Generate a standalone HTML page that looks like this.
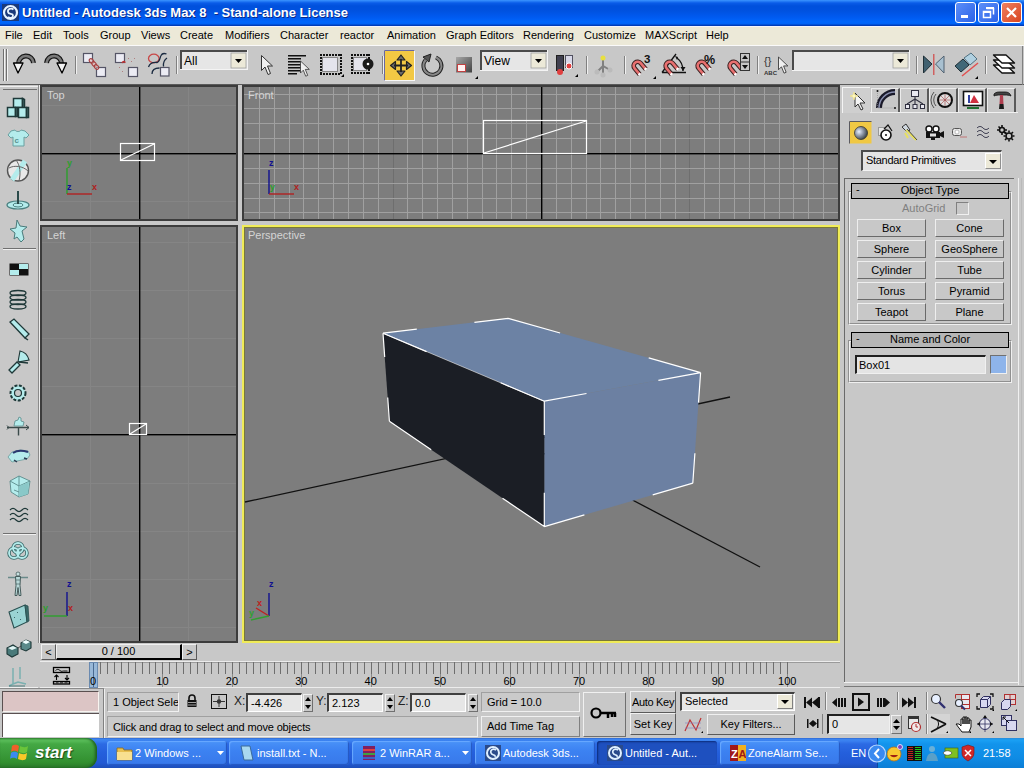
<!DOCTYPE html>
<html><head><meta charset="utf-8">
<style>
*{margin:0;padding:0;box-sizing:border-box}
html,body{width:1024px;height:768px;overflow:hidden;background:#c8c8c8;font-family:"Liberation Sans",sans-serif;font-size:11px;color:#000}
.a{position:absolute}
svg{display:block}
.tb{top:2px;width:21px;height:21px;border:1px solid #fff;border-radius:3px}
.mi{position:absolute;top:3px;font-size:11px;white-space:pre}
.btn{position:absolute;white-space:nowrap;background:#c8c8c8;border:1px solid;border-color:#f0f0f0 #5a5a5a #5a5a5a #f0f0f0;text-align:center;font-size:11px;line-height:16px}
.inp{position:absolute;background:#e6e6e6;border:1px solid;border-color:#404040 #ffffff #ffffff #404040;font-size:11px;white-space:pre}
</style></head><body>
<div class="a" style="left:0;top:0;width:1024px;height:26px;background:linear-gradient(#3c95ff 0px,#2a82f8 1px,#0a5ce8 3px,#0050dc 6px,#0052e0 11px,#005af0 17px,#0066fc 22px,#0062f4 24px,#0040c0 25px,#0038b0 26px)"></div>
<div class="a" style="left:22px;top:5px;color:#fff;font-weight:bold;font-size:13px;white-space:pre;text-shadow:1px 1px 0 #0a2a8a">Untitled - Autodesk 3ds Max 8  - Stand-alone License</div>
<div class="a tb" style="left:955px;background:linear-gradient(135deg,#5d8ff8,#2a62e8)"></div>
<div class="a tb" style="left:978px;background:linear-gradient(135deg,#5d8ff8,#2a62e8)"></div>
<div class="a tb" style="left:1001px;background:linear-gradient(135deg,#f08060,#d84420)"></div>
<svg class="a" style="left:2px;top:4px" width="17" height="17" viewBox="0 0 17 17"><rect x="0" y="0" width="17" height="17" fill="#1a3a7a"/><circle cx="8.5" cy="8.5" r="6.5" fill="none" stroke="#e8f4ff" stroke-width="2.2"/><path d="M11.5 5.5c-2.5-2-6-.5-5.5 2.5s5 1 5 3.5-3 3-5 1.5" fill="none" stroke="#e8f4ff" stroke-width="1.8"/></svg>
<svg class="a" style="left:955px;top:2px" width="68" height="22" viewBox="955 2 68 22">
<rect x="961" y="15" width="7" height="3" fill="#fff"/>
<rect x="983.5" y="11.5" width="7" height="6" fill="none" stroke="#fff" stroke-width="1.5"/><rect x="983" y="11" width="8" height="2" fill="#fff"/>
<path d="M986.5 8.5h7v6" fill="none" stroke="#fff" stroke-width="1.5"/><rect x="986" y="7" width="8" height="2" fill="#fff"/>
<path d="M1007 8l9 9M1016 8l-9 9" stroke="#fff" stroke-width="2.2"/>
</svg>
<div class="a" style="left:0;top:26px;width:1024px;height:19px;background:#ece9d8">
<span class="mi" style="left:5px">File</span><span class="mi" style="left:33px">Edit</span><span class="mi" style="left:63px">Tools</span><span class="mi" style="left:100px">Group</span><span class="mi" style="left:141px">Views</span><span class="mi" style="left:180px">Create</span><span class="mi" style="left:225px">Modifiers</span><span class="mi" style="left:280px">Character</span><span class="mi" style="left:340px">reactor</span><span class="mi" style="left:387px">Animation</span><span class="mi" style="left:446px">Graph Editors</span><span class="mi" style="left:523px">Rendering</span><span class="mi" style="left:584px">Customize</span><span class="mi" style="left:645px">MAXScript</span><span class="mi" style="left:706px">Help</span>
</div>
<div class="a" style="left:0;top:45px;width:1024px;height:1px;background:#fafafa"></div>

<div class="a" style="left:0;top:26px;width:1024px;height:1px;background:#f4f4fc"></div><div class="a" style="left:0;top:46px;width:1024px;height:38px;background:#c8c8c8"></div>
<div class="a" style="left:0;top:84px;width:1024px;height:1px;background:#5a5a5a"></div>
<svg class="a" style="left:0;top:0" width="1024" height="90" viewBox="0 0 1024 90">
<rect x="3" y="49" width="1" height="32" fill="#707070"/><rect x="6" y="49" width="1" height="32" fill="#707070"/><rect x="4" y="49" width="1" height="32" fill="#f4f4f4"/><rect x="7" y="49" width="1" height="32" fill="#f4f4f4"/>
<rect x="75" y="56" width="1" height="18" fill="#808080"/><rect x="76" y="56" width="1" height="18" fill="#f0f0f0"/>
<rect x="176" y="56" width="1" height="18" fill="#808080"/><rect x="177" y="56" width="1" height="18" fill="#f0f0f0"/>
<rect x="382" y="56" width="1" height="18" fill="#808080"/><rect x="383" y="56" width="1" height="18" fill="#f0f0f0"/>
<rect x="586" y="56" width="1" height="18" fill="#808080"/><rect x="587" y="56" width="1" height="18" fill="#f0f0f0"/>
<rect x="624" y="56" width="1" height="18" fill="#808080"/><rect x="625" y="56" width="1" height="18" fill="#f0f0f0"/>
<rect x="757" y="56" width="1" height="18" fill="#808080"/><rect x="758" y="56" width="1" height="18" fill="#f0f0f0"/>
<rect x="916" y="56" width="1" height="18" fill="#808080"/><rect x="917" y="56" width="1" height="18" fill="#f0f0f0"/>
<rect x="985" y="56" width="1" height="18" fill="#808080"/><rect x="986" y="56" width="1" height="18" fill="#f0f0f0"/>
<path d="M18.5 64 A7.5 7.5 0 0 1 33.5 63" fill="none" stroke="#151515" stroke-width="5"/><path d="M18.5 64 A7.5 7.5 0 0 1 33.5 63" fill="none" stroke="#7a7a7a" stroke-width="2.6"/>
<path d="M13.5 63L23 63L18 73Z" fill="#f4f4f4" stroke="#000" stroke-width="1.3" stroke-linejoin="round"/>
<path d="M46.5 63 A7.5 7.5 0 0 1 61.5 64" fill="none" stroke="#151515" stroke-width="5"/><path d="M46.5 63 A7.5 7.5 0 0 1 61.5 64" fill="none" stroke="#7a7a7a" stroke-width="2.6"/>
<path d="M57 63L66.5 63L62 73Z" fill="#f4f4f4" stroke="#000" stroke-width="1.3" stroke-linejoin="round"/>
<rect x="83.5" y="53.5" width="9" height="9" fill="#ececf4" stroke="#555566" stroke-width="1.2"/>
<rect x="96.5" y="67.5" width="9" height="9" fill="#ececf4" stroke="#555566" stroke-width="1.2"/>
<g fill="#e8c0c0" fill-opacity="0.5" stroke="#a84040" stroke-width="1.1"><ellipse cx="91.5" cy="61" rx="2.6" ry="1.8" transform="rotate(45 91.5 61)"/><ellipse cx="94" cy="64" rx="2.6" ry="1.8" transform="rotate(45 94 64)"/><ellipse cx="96.5" cy="67" rx="2.6" ry="1.8" transform="rotate(45 96.5 67)"/></g>
<rect x="115.5" y="53.5" width="9" height="9" fill="#ececf4" stroke="#555566" stroke-width="1.2"/>
<rect x="128.5" y="67.5" width="9" height="9" fill="#ececf4" stroke="#555566" stroke-width="1.2"/>
<path d="M122 63c1-2 3-2 3 0" stroke="#c03030" stroke-width="1.3" fill="none"/><g fill="#b08080"><rect x="128" y="58" width="1" height="1"/><rect x="131" y="61" width="1" height="1"/><rect x="134" y="58" width="1" height="1"/><rect x="119" y="67" width="1" height="1"/><rect x="122" y="71" width="1" height="1"/></g>
<rect x="160.5" y="67.5" width="8.5" height="8.5" fill="#ececf4" stroke="#555566" stroke-width="1.2"/>
<g fill="none" stroke-width="1.3"><ellipse cx="153.8" cy="58.5" rx="5.3" ry="4.3" stroke="#c84848"/><path d="M148.5 67C150 63 153 62 157 62.5C160 62 160 57 161 55.5C162 53.5 164 53 166.5 54" stroke="#1a2a40"/><path d="M152 74C152 70 154 68 159.5 68" stroke="#1a2a40"/><path d="M163.5 66.5C163 62 164 60 167 58" stroke="#1a2a40"/></g>
<rect x="180" y="50" width="68" height="20" fill="#e6e6e6"/><rect x="180" y="69" width="68" height="1" fill="#f4f4f4"/><rect x="247" y="50" width="1" height="20" fill="#f4f4f4"/><rect x="180" y="50" width="67" height="2" fill="#4a4a4a"/><rect x="180" y="50" width="2" height="19" fill="#4a4a4a"/>
<rect x="231" y="53" width="15" height="15" fill="#ece9d8" stroke="#a0a0a0" stroke-width="0.8"/><path d="M235 59h7l-3.5 4z" fill="#000"/>
<text x="184" y="65" font-family="Liberation Sans" font-size="12">All</text>
<path transform="translate(261.5,55.5) scale(1)" d="M0 0L0 15L3.5 11.5L6.5 19L9 18L6 10.5L11 10.5Z" fill="#f0f0f0" stroke="#333" stroke-width="1"/>
<g fill="#111"><rect x="288" y="55" width="18" height="1.5"/><rect x="288" y="58" width="13" height="1.5"/><rect x="288" y="61" width="13" height="1.5"/><rect x="288" y="64" width="13" height="1.5"/><rect x="288" y="67" width="13" height="1.5"/><rect x="288" y="70" width="13" height="1.5"/><rect x="288" y="73" width="9" height="1.5"/></g>
<path transform="translate(300.5,61) scale(0.8)" d="M0 0L0 15L3.5 11.5L6.5 19L9 18L6 10.5L11 10.5Z" fill="#f0f0f0" stroke="#333" stroke-width="1"/>
<g fill="#111"><rect x="320" y="54" width="2" height="2"/><rect x="320" y="73" width="2" height="2"/><rect x="323" y="54" width="2" height="2"/><rect x="323" y="73" width="2" height="2"/><rect x="326" y="54" width="2" height="2"/><rect x="326" y="73" width="2" height="2"/><rect x="329" y="54" width="2" height="2"/><rect x="329" y="73" width="2" height="2"/><rect x="332" y="54" width="2" height="2"/><rect x="332" y="73" width="2" height="2"/><rect x="335" y="54" width="2" height="2"/><rect x="335" y="73" width="2" height="2"/><rect x="338" y="54" width="2" height="2"/><rect x="338" y="73" width="2" height="2"/><rect x="320" y="54" width="2" height="2"/><rect x="340" y="54" width="2" height="2"/><rect x="320" y="57" width="2" height="2"/><rect x="340" y="57" width="2" height="2"/><rect x="320" y="60" width="2" height="2"/><rect x="340" y="60" width="2" height="2"/><rect x="320" y="63" width="2" height="2"/><rect x="340" y="63" width="2" height="2"/><rect x="320" y="66" width="2" height="2"/><rect x="340" y="66" width="2" height="2"/><rect x="320" y="69" width="2" height="2"/><rect x="340" y="69" width="2" height="2"/><rect x="320" y="72" width="2" height="2"/><rect x="340" y="72" width="2" height="2"/></g>
<rect x="322.5" y="57.5" width="15" height="14" fill="#e4e4ec" stroke="#888" stroke-width="1"/>
<path d="M341 77l3-3v3z" fill="#000"/>
<g fill="#111"><rect x="351" y="54" width="2" height="2"/><rect x="351" y="72" width="2" height="2"/><rect x="354" y="54" width="2" height="2"/><rect x="354" y="72" width="2" height="2"/><rect x="357" y="54" width="2" height="2"/><rect x="357" y="72" width="2" height="2"/><rect x="360" y="54" width="2" height="2"/><rect x="360" y="72" width="2" height="2"/><rect x="363" y="54" width="2" height="2"/><rect x="363" y="72" width="2" height="2"/><rect x="366" y="54" width="2" height="2"/><rect x="366" y="72" width="2" height="2"/><rect x="351" y="54" width="2" height="2"/><rect x="368" y="54" width="2" height="2"/><rect x="351" y="57" width="2" height="2"/><rect x="368" y="57" width="2" height="2"/><rect x="351" y="60" width="2" height="2"/><rect x="368" y="60" width="2" height="2"/><rect x="351" y="63" width="2" height="2"/><rect x="368" y="63" width="2" height="2"/><rect x="351" y="66" width="2" height="2"/><rect x="368" y="66" width="2" height="2"/><rect x="351" y="69" width="2" height="2"/><rect x="368" y="69" width="2" height="2"/><rect x="351" y="72" width="2" height="2"/><rect x="368" y="72" width="2" height="2"/></g>
<rect x="353.5" y="57.5" width="13" height="13" fill="#e4e4ec" stroke="#888"/><circle cx="368" cy="64" r="5.5" fill="#1a1a1a"/><circle cx="368" cy="64" r="1.3" fill="#fff"/>
<rect x="384.5" y="50.5" width="30" height="30" fill="#f2c844" stroke="#f8f8f8"/><path d="M384.5 80.5V50.5H414.5" fill="none" stroke="#6868a0"/>
<g fill="#6a6a6a" stroke="#222" stroke-width="1.2" stroke-linejoin="round"><path d="M401 55L397 60H405Z"/><path d="M401 76L397 71H405Z"/><path d="M390.5 65.5L395.5 61.5V69.5Z"/><path d="M411.5 65.5L406.5 61.5V69.5Z"/></g><path d="M401 59V72M394 65.5H408" stroke="#222" stroke-width="1.8"/>
<path d="M425.5 60 A9 9 0 1 0 436 57.5" fill="none" stroke="#222" stroke-width="4"/><path d="M425.5 60 A9 9 0 1 0 436 57.5" fill="none" stroke="#888" stroke-width="2"/>
<path d="M423 57L431 54L429 62Z" fill="#555" stroke="#222" stroke-width="1"/>
<defs><linearGradient id="sg" x1="0" y1="0" x2="1" y2="1"><stop offset="0" stop-color="#a8a8a8"/><stop offset="1" stop-color="#404040"/></linearGradient></defs>
<rect x="456" y="57" width="16" height="15.5" fill="url(#sg)"/><rect x="457.5" y="64.5" width="8" height="7" fill="#fff0f0" stroke="#c04040" stroke-width="1"/><path d="M475 79l3-3v3z" fill="#000"/>
<rect x="480" y="50" width="68" height="21" fill="#e6e6e6"/><rect x="480" y="70" width="68" height="1" fill="#f4f4f4"/><rect x="547" y="50" width="1" height="21" fill="#f4f4f4"/><rect x="480" y="50" width="67" height="2" fill="#4a4a4a"/><rect x="480" y="50" width="2" height="20" fill="#4a4a4a"/>
<rect x="531" y="53" width="15" height="15" fill="#ece9d8" stroke="#a0a0a0" stroke-width="0.8"/><path d="M535 59h7l-3.5 4z" fill="#000"/>
<text x="484" y="65" font-family="Liberation Sans" font-size="12">View</text>
<rect x="556.5" y="55.5" width="7" height="15" fill="#404050" stroke="#202020"/><rect x="565.5" y="55.5" width="7" height="12" fill="#d8d8e8" stroke="#505060"/><circle cx="560" cy="72" r="3" fill="#e04040"/><circle cx="569" cy="66" r="3" fill="#e04040" stroke="#fff" stroke-width="1"/><path d="M575 77l3-3v3z" fill="#000"/>
<path d="M603 57V66M597 72L603 66L610 70M603 66V74" stroke="#808080" stroke-width="2" fill="none"/><circle cx="603" cy="58" r="2.5" fill="#e8e040"/><circle cx="597" cy="72" r="2.5" fill="#bbb"/><circle cx="610" cy="70" r="2.5" fill="#bbb"/><circle cx="603" cy="75" r="2.5" fill="#bbb"/>
<path transform="translate(637,65) rotate(-40)" d="M-4 9V1A4 4 0 0 1 4 1V9" fill="none" stroke="#3a2020" stroke-width="4.6"/><path transform="translate(637,65) rotate(-40)" d="M-4 9V1A4 4 0 0 1 4 1V9" fill="none" stroke="#e87070" stroke-width="2.6"/><path transform="translate(637,65) rotate(-40)" d="M-4 7.5V9.5M4 7.5V9.5" stroke="#fff" stroke-width="2.6"/><text x="644" y="63" font-family="Liberation Sans" font-weight="bold" font-size="11.5" fill="#111">3</text><path d="M653 79l3-3v3z" fill="#000"/><path d="M662 72.5H686M662 72.5L676 54M677 58c4 3 6 8 6 13" stroke="#111" stroke-width="1.3" fill="none"/><path d="M683 71l-2.5-4h5z" fill="#111"/><path d="M675 56l3 1-1 3z" fill="#111"/><path transform="translate(669,65) rotate(-40)" d="M-4 9V1A4 4 0 0 1 4 1V9" fill="none" stroke="#3a2020" stroke-width="4.6"/><path transform="translate(669,65) rotate(-40)" d="M-4 9V1A4 4 0 0 1 4 1V9" fill="none" stroke="#e87070" stroke-width="2.6"/><path transform="translate(669,65) rotate(-40)" d="M-4 7.5V9.5M4 7.5V9.5" stroke="#fff" stroke-width="2.6"/><path transform="translate(701,65) rotate(-40)" d="M-4 9V1A4 4 0 0 1 4 1V9" fill="none" stroke="#3a2020" stroke-width="4.6"/><path transform="translate(701,65) rotate(-40)" d="M-4 9V1A4 4 0 0 1 4 1V9" fill="none" stroke="#e87070" stroke-width="2.6"/><path transform="translate(701,65) rotate(-40)" d="M-4 7.5V9.5M4 7.5V9.5" stroke="#fff" stroke-width="2.6"/><text x="704" y="64" font-family="Liberation Sans" font-weight="bold" font-size="12.5" fill="#111">%</text><path transform="translate(733,65) rotate(-40)" d="M-4 9V1A4 4 0 0 1 4 1V9" fill="none" stroke="#3a2020" stroke-width="4.6"/><path transform="translate(733,65) rotate(-40)" d="M-4 9V1A4 4 0 0 1 4 1V9" fill="none" stroke="#e87070" stroke-width="2.6"/><path transform="translate(733,65) rotate(-40)" d="M-4 7.5V9.5M4 7.5V9.5" stroke="#fff" stroke-width="2.6"/><rect x="740.5" y="53.5" width="9" height="17" fill="#c8c8c8" stroke="#333"/><path d="M742 59h6l-3-4zM742 65h6l-3 4z" fill="#111"/><rect x="741" y="61.5" width="8" height="1" fill="#333"/>
<text x="764" y="65" font-family="Liberation Sans" font-size="11" fill="#333">{}</text><text x="764" y="75" font-family="Liberation Sans" font-weight="bold" font-size="6" fill="#333">ABC</text>
<path transform="translate(778.5,57) scale(0.85)" d="M0 0L0 15L3.5 11.5L6.5 19L9 18L6 10.5L11 10.5Z" fill="#f0f0f0" stroke="#333" stroke-width="1"/>
<rect x="792" y="50" width="118" height="21" fill="#e6e6e6"/><rect x="792" y="70" width="118" height="1" fill="#f4f4f4"/><rect x="909" y="50" width="1" height="21" fill="#f4f4f4"/><rect x="792" y="50" width="117" height="2" fill="#4a4a4a"/><rect x="792" y="50" width="2" height="20" fill="#4a4a4a"/>
<rect x="893" y="53" width="15" height="15" fill="#ece9d8" stroke="#a0a0a0" stroke-width="0.8"/><path d="M897 59h7l-3.5 4z" fill="#000"/>
<path d="M923.5 56L932 64L923.5 73Z" fill="#406070" stroke="#203038"/><path d="M944 56L935.5 64L944 73Z" fill="#a8c0d0" stroke="#506070"/><rect x="933" y="54" width="1.5" height="21" fill="#d06060"/>
<path d="M955 66L963 59L969 65L961 72Z" fill="#406878" stroke="#203038"/><path d="M964 58L971 53L977 59L970 65Z" fill="#b0d0e0" stroke="#507080"/><path d="M962 76L978 63" stroke="#e05050" stroke-width="1.5"/><path d="M975 79l3-3v3z" fill="#000"/>
<g fill="#fff" stroke="#111" stroke-width="1.4" stroke-linejoin="round"><path d="M993.5 65H1006L1014.5 73H1002Z"/><path d="M993.5 60H1006L1014.5 68H1002Z"/><path d="M993.5 55H1006L1014.5 63H1002Z"/></g>
</svg><div class="a" style="left:0;top:85px;width:40px;height:603px;background:#c8c8c8"></div>
<div class="a" style="left:0;top:86px;width:38px;height:1px;background:#f0f0f0"></div>
<div class="a" style="left:3px;top:89px;width:34px;height:1px;background:#707070"></div>
<div class="a" style="left:38px;top:85px;width:1px;height:603px;background:#8a8a8a"></div>
<div class="a" style="left:39px;top:85px;width:1px;height:603px;background:#ececec"></div>
<div class="a" style="left:0;top:687px;width:40px;height:1px;background:#f0f0f0"></div>
<div class="a" style="left:0;top:688px;width:104px;height:1px;background:#8a8a8a"></div>
<svg class="a" style="left:0;top:85px" width="40" height="603" viewBox="0 85 40 603">
<rect x="3" y="248" width="33" height="1" fill="#707070"/><rect x="3" y="249" width="33" height="1" fill="#f0f0f0"/>
<rect x="3" y="533" width="33" height="1" fill="#707070"/><rect x="3" y="534" width="33" height="1" fill="#f0f0f0"/>
<g stroke="#1e3838" stroke-width="1.5"><path d="M13.5 98.5h9v9h-9z" fill="#b4ecec"/><path d="M22.5 98.5l2 1v9h-2z" fill="#4a7070"/><path d="M7.5 107.5h8v9h-8z" fill="#b4ecec"/><path d="M15.5 107.5h2v9h-2z" fill="#4a7070"/><path d="M18.5 107.5h8v10h-8z" fill="#b4ecec"/><path d="M26.5 107.5h2v10h-2z" fill="#4a7070"/></g>
<path d="M11 131l4-1c1 2 5 2 6 0l4 1 4 4-3 3-2-1v9H13v-9l-2 1-3-3z" fill="#b4ecec" stroke="#6aa0a0" stroke-width="1"/><text x="14.5" y="143" font-size="8" font-weight="bold" fill="#5a9090" font-family="Liberation Sans">c</text>
<circle cx="18" cy="170.5" r="10.5" fill="#e8e8e8" stroke="#555" stroke-width="1.4"/><path d="M12 180L25 161" stroke="#b4ecec" stroke-width="5"/><path d="M9 168c5-3 14-2 19 3M16 160c4 5 5 13 3 21" fill="none" stroke="#666" stroke-width="1"/>
<ellipse cx="18" cy="205" rx="11" ry="4" fill="#b4ecec" stroke="#4a8080" stroke-width="1.2"/><ellipse cx="18" cy="205" rx="5" ry="2" fill="none" stroke="#4a8080" stroke-width="1"/><path d="M18 191v13" stroke="#2a4a4a" stroke-width="2"/>
<path d="M17 220l3 6 7 1-5 4 2 8-3 3-4-5-3 2 1-6-5-4 6-1z" fill="#b4ecec" stroke="#4a7a7a" stroke-width="1"/>
<rect x="9.5" y="263.5" width="19" height="12" fill="#111"/><rect x="19" y="264" width="9" height="5" fill="#b4ecec"/><rect x="10" y="270" width="9" height="5" fill="#b4ecec"/>
<g fill="none" stroke="#1e3838" stroke-width="1.3"><ellipse cx="18" cy="293" rx="8" ry="2.5"/><ellipse cx="18" cy="297.5" rx="8" ry="2.5"/><ellipse cx="18" cy="302" rx="8" ry="2.5"/><ellipse cx="18" cy="306.5" rx="8" ry="2.5"/></g>
<path d="M10 322l4-3 15 15-4 4z" fill="#b4ecec" stroke="#1e3838" stroke-width="1.3"/><path d="M25 338l3 2" stroke="#1e3838" stroke-width="1.5"/>
<path d="M17 362l-8 8 3 3 8-8z" fill="#b4ecec" stroke="#1e3838" stroke-width="1.3"/><path d="M18 362l2-11c5 1 8 5 9 9z" fill="#b4ecec" stroke="#1e3838" stroke-width="1.1"/><path d="M19 362l9 1" stroke="#1e3838" stroke-width="1.3"/>
<circle cx="18" cy="393" r="7.5" fill="#b4ecec" stroke="#1e3838" stroke-width="2" stroke-dasharray="3 1.5"/><circle cx="18" cy="393" r="3.5" fill="#c8c8c8" stroke="#1e3838" stroke-width="1.2"/>
<path d="M7 427.5h22M18.5 427.5v8" stroke="#3a4a4a" stroke-width="1.4"/><path d="M26 425l3 2.5-3 2.5M7 425.5l2 2-2 2" fill="none" stroke="#3a4a4a" stroke-width="1"/><path d="M14 426l1-5 3-1 1-3 2 1v3l3 1-1 4z" fill="#b4ecec" stroke="#5a8a8a" stroke-width="0.8"/><path d="M8 457l4-5 8-2 8 1 2 4-3 4-15 3z" fill="#b4ecec" stroke="#6a9a9a" stroke-width="0.8"/><path d="M13 453c3-2 8-3 15-1" fill="none" stroke="#2a3a70" stroke-width="2"/><path d="M14 460l3 2M24 458l3 1" stroke="#2a3a50" stroke-width="1.5"/><path d="M10 481l9-5 11 5-2 13-9 3-8-5z" fill="#b4ecec" stroke="#5a8a8a" stroke-width="0.9"/><path d="M19 476l0 21M10 481l9 5 11-5M14 490l5 2" fill="none" stroke="#5a8a8a" stroke-width="0.9"/><path d="M19 486l10-4-1 12-9 3z" fill="#8ac8c8"/><path d="M10 510c2-2 4-2 6 0s4 2 6 0 4-2 6 0M10 515c2-2 4-2 6 0s4 2 6 0 4-2 6 0M10 520c2-2 4-2 6 0s4 2 6 0 4-2 6 0" fill="none" stroke="#1e3838" stroke-width="1.2"/>
<g fill="none" stroke="#3a6a6a" stroke-width="3.5"><circle cx="14" cy="553" r="5"/><circle cx="22" cy="553" r="5"/><circle cx="18" cy="548" r="5"/></g><g fill="none" stroke="#b4ecec" stroke-width="1.8"><circle cx="14" cy="553" r="5"/><circle cx="22" cy="553" r="5"/><circle cx="18" cy="548" r="5"/></g>
<path d="M8 577.5h20" stroke="#6a8a8a" stroke-width="1.5"/><circle cx="18" cy="574" r="2" fill="#c8e0e0" stroke="#4a6060" stroke-width="0.8"/><path d="M15.5 576.5h5l-0.5 9 1 10h-2l-1-8-1 8h-2l1-10z" fill="#b8d8d8" stroke="#3a5050" stroke-width="0.9"/><path d="M16 580h4M16 584h4" stroke="#3a5050" stroke-width="0.6"/><path d="M9 612l16-7 2 17-13 6z" fill="#9ad4d4" stroke="#2a5050" stroke-width="1.1"/><path d="M25 605l3 1 1 15-2 1z" fill="#3a6a6a" stroke="#2a5050" stroke-width="0.8"/><g fill="#3a6a6a"><rect x="17" y="612" width="1" height="1"/><rect x="14" y="617" width="1" height="1"/><rect x="20" y="619" width="1" height="1"/></g><path d="M7 648l6-3 5 3v6l-6 3-5-3z" fill="#4a7a7a" stroke="#1e3838" stroke-width="1.1"/><path d="M8 648l5-2 4 2-5 2z" fill="#e0f4f4"/><path d="M21 643l5-3 5 2v6l-5 3-5-2z" fill="#5a8a8a" stroke="#1e3838" stroke-width="1.1"/><path d="M22 642l4-2 4 2-4 2z" fill="#f0ffff"/><path d="M18 648l3-2" stroke="#333" stroke-width="0.8"/><path d="M13 668v16l-4 2M13 684l5-2 8 2M20 667v12" fill="none" stroke="#7ab0b0" stroke-width="1.5"/><path d="M9 686l16 0" stroke="#4a7a7a" stroke-width="1"/>
</svg><svg class="a" style="left:0;top:0" width="1024" height="768" viewBox="0 0 1024 768"><rect x="40" y="85" width="198" height="136" fill="#3c3c3c"/><rect x="42" y="87" width="194" height="132" fill="#7d7d7d"/><rect x="242" y="85" width="598" height="136" fill="#3c3c3c"/><rect x="244" y="87" width="594" height="132" fill="#7d7d7d"/><rect x="40" y="225" width="198" height="418" fill="#3c3c3c"/><rect x="42" y="227" width="194" height="414" fill="#7d7d7d"/><rect x="242" y="225" width="598" height="418" fill="#f0ec58"/><rect x="244" y="227" width="594" height="414" fill="#7a7838"/><rect x="245" y="228" width="592" height="412" fill="#7d7d7d"/><rect x="259" y="87" width="1" height="132" fill="#a0a0a0"/><rect x="274" y="87" width="1" height="132" fill="#a0a0a0"/><rect x="289" y="87" width="1" height="132" fill="#a0a0a0"/><rect x="303" y="87" width="1" height="132" fill="#a0a0a0"/><rect x="318" y="87" width="1" height="132" fill="#a0a0a0"/><rect x="333" y="87" width="1" height="132" fill="#a0a0a0"/><rect x="348" y="87" width="1" height="132" fill="#a0a0a0"/><rect x="363" y="87" width="1" height="132" fill="#a0a0a0"/><rect x="378" y="87" width="1" height="132" fill="#a0a0a0"/><rect x="393" y="87" width="1" height="132" fill="#6e6e6e"/><rect x="407" y="87" width="1" height="132" fill="#a0a0a0"/><rect x="422" y="87" width="1" height="132" fill="#a0a0a0"/><rect x="437" y="87" width="1" height="132" fill="#a0a0a0"/><rect x="452" y="87" width="1" height="132" fill="#a0a0a0"/><rect x="467" y="87" width="1" height="132" fill="#a0a0a0"/><rect x="482" y="87" width="1" height="132" fill="#a0a0a0"/><rect x="496" y="87" width="1" height="132" fill="#a0a0a0"/><rect x="511" y="87" width="1" height="132" fill="#a0a0a0"/><rect x="526" y="87" width="1" height="132" fill="#a0a0a0"/><rect x="556" y="87" width="1" height="132" fill="#a0a0a0"/><rect x="571" y="87" width="1" height="132" fill="#a0a0a0"/><rect x="586" y="87" width="1" height="132" fill="#a0a0a0"/><rect x="600" y="87" width="1" height="132" fill="#a0a0a0"/><rect x="615" y="87" width="1" height="132" fill="#a0a0a0"/><rect x="630" y="87" width="1" height="132" fill="#a0a0a0"/><rect x="645" y="87" width="1" height="132" fill="#a0a0a0"/><rect x="660" y="87" width="1" height="132" fill="#a0a0a0"/><rect x="675" y="87" width="1" height="132" fill="#a0a0a0"/><rect x="689" y="87" width="1" height="132" fill="#6e6e6e"/><rect x="704" y="87" width="1" height="132" fill="#a0a0a0"/><rect x="719" y="87" width="1" height="132" fill="#a0a0a0"/><rect x="734" y="87" width="1" height="132" fill="#a0a0a0"/><rect x="749" y="87" width="1" height="132" fill="#a0a0a0"/><rect x="764" y="87" width="1" height="132" fill="#a0a0a0"/><rect x="779" y="87" width="1" height="132" fill="#a0a0a0"/><rect x="793" y="87" width="1" height="132" fill="#a0a0a0"/><rect x="808" y="87" width="1" height="132" fill="#a0a0a0"/><rect x="823" y="87" width="1" height="132" fill="#a0a0a0"/><rect x="244" y="94" width="594" height="1" fill="#a0a0a0"/><rect x="244" y="108" width="594" height="1" fill="#a0a0a0"/><rect x="244" y="123" width="594" height="1" fill="#a0a0a0"/><rect x="244" y="138" width="594" height="1" fill="#a0a0a0"/><rect x="244" y="168" width="594" height="1" fill="#a0a0a0"/><rect x="244" y="183" width="594" height="1" fill="#a0a0a0"/><rect x="244" y="198" width="594" height="1" fill="#a0a0a0"/><rect x="244" y="212" width="594" height="1" fill="#a0a0a0"/><rect x="90" y="87" width="1" height="132" fill="#858585"/><rect x="90" y="227" width="1" height="414" fill="#858585"/><rect x="188" y="87" width="1" height="132" fill="#858585"/><rect x="188" y="227" width="1" height="414" fill="#858585"/><rect x="42" y="105" width="194" height="1" fill="#858585"/><rect x="42" y="201" width="194" height="1" fill="#858585"/><rect x="42" y="242" width="194" height="1" fill="#858585"/><rect x="42" y="290" width="194" height="1" fill="#858585"/><rect x="42" y="338" width="194" height="1" fill="#858585"/><rect x="42" y="386" width="194" height="1" fill="#858585"/><rect x="42" y="483" width="194" height="1" fill="#858585"/><rect x="42" y="531" width="194" height="1" fill="#858585"/><rect x="42" y="579" width="194" height="1" fill="#858585"/><rect x="42" y="627" width="194" height="1" fill="#858585"/><rect x="139" y="87" width="1.4" height="132" fill="#000"/><rect x="42" y="153" width="194" height="1.4" fill="#000"/><rect x="541" y="87" width="1.4" height="132" fill="#000"/><rect x="244" y="153" width="594" height="1.4" fill="#000"/><rect x="139" y="227" width="1.4" height="414" fill="#000"/><rect x="42" y="434" width="194" height="1.4" fill="#000"/><g fill="none" stroke="#fff" stroke-width="1.2"><rect x="120.5" y="143.5" width="34" height="17"/><path d="M121 160L154 144"/><rect x="483.5" y="120.5" width="103" height="33"/><path d="M484 153L586 121"/><rect x="129.5" y="423.5" width="17" height="11"/><path d="M130 434L146 424"/></g><path d="M245 502L730 397" stroke="#111" stroke-width="1.3" fill="none"/><path d="M543 453L760 567" stroke="#111" stroke-width="1.3" fill="none"/><path d="M383 333.2L508.2 318.3L700.6 372.6L544.3 401.2Z" fill="#6c82a4"/><path d="M544.3 401.2L700.6 372.6L692.8 483.2L544.3 526.6Z" fill="#6c80a2"/><path d="M383 333.2L544.3 401.2L544.3 526.6L389.4 421.3Z" fill="#1b1e25"/><path d="M383 333.2L416.8 329.2 M383 333.2L384.7 357.0 M383 333.2L426.6 351.6 M508.2 318.3L474.4 322.3 M508.2 318.3L560.1 333.0 M700.6 372.6L648.7 357.9 M700.6 372.6L698.5 402.5 M700.6 372.6L658.4 380.3 M692.8 483.2L694.9 453.3 M692.8 483.2L652.7 494.9 M544.3 526.6L584.4 514.9 M544.3 526.6L502.5 498.2 M544.3 526.6L544.3 492.7 M389.4 421.3L387.7 397.5 M389.4 421.3L431.2 449.7 M544.3 401.2L586.5 393.5 M544.3 401.2L500.7 382.8 M544.3 401.2L544.3 435.1" fill="none" stroke="#fff" stroke-width="1.2"/><path d="M383 333.2L544.3 401.2" fill="none" stroke="#fff" stroke-width="1" stroke-opacity="0.55"/><g stroke-width="1.4" fill="none"><path d="M67 194L67 168" stroke="#2ca02c"/><path d="M67 194L92 194" stroke="#b02020"/><path d="M269 194L269 170" stroke="#101090"/><path d="M269 194L294 194" stroke="#b02020"/><path d="M67 616L67 592" stroke="#101090"/><path d="M67 616L44 616" stroke="#2ca02c"/><path d="M269 616L269 593" stroke="#101090"/><path d="M269 616L256 608" stroke="#c02020"/><path d="M269 616L251 620" stroke="#30a030"/></g><g font-size="9" font-weight="bold" font-family="Liberation Sans"><text x="67" y="166" fill="#2ca02c">y</text><text x="67" y="190" fill="#101090">z</text><text x="92" y="190" fill="#b02020">x</text><text x="269" y="166" fill="#101090">z</text><text x="270" y="190" fill="#2ca02c">y</text><text x="294" y="190" fill="#b02020">x</text><text x="67" y="587" fill="#101090">z</text><text x="43" y="611" fill="#2ca02c">y</text><text x="68" y="611" fill="#b02020">x</text><text x="269" y="587" fill="#101090">z</text><text x="257" y="606" fill="#c02020">x</text><text x="249" y="616" fill="#30a030">y</text></g><g font-size="11" fill="#d4d4d4" font-family="Liberation Sans"><text x="47" y="99">Top</text><text x="248" y="99">Front</text><text x="47" y="239">Left</text><text x="248" y="239">Perspective</text></g></svg><div class="a" style="left:840px;top:85px;width:184px;height:603px;background:#c8c8c8"></div>
<div class="a" style="left:1022px;top:46px;width:1px;height:39px;background:#808080"></div>
<div class="a" style="left:844px;top:178px;width:1px;height:505px;background:#6a6a6a"></div>
<div class="a" style="left:844px;top:178px;width:170px;height:1px;background:#6a6a6a"></div>
<div class="a" style="left:1018px;top:178px;width:1px;height:507px;background:#f0f0f0"></div>
<div class="a" style="left:844px;top:682px;width:175px;height:1px;background:#f0f0f0"></div>
<div class="a" style="left:841px;top:686px;width:183px;height:1px;background:#7a7a7a"></div>
<div class="a" style="left:842px;top:87px;width:28px;height:26px;background:#cfcfcf;border-top:1px solid #f4f4f4;border-left:1px solid #f4f4f4"></div>
<div class="a" style="left:871px;top:88px;width:29px;height:24px;background:#c8c8c8;border-top:1px solid #ececec;border-left:1px solid #ececec;border-right:2px solid #5a5a5a"></div>
<div class="a" style="left:900px;top:88px;width:29px;height:24px;background:#c8c8c8;border-top:1px solid #ececec;border-left:1px solid #ececec;border-right:2px solid #5a5a5a"></div>
<div class="a" style="left:929px;top:88px;width:29px;height:24px;background:#c8c8c8;border-top:1px solid #ececec;border-left:1px solid #ececec;border-right:2px solid #5a5a5a"></div>
<div class="a" style="left:958px;top:88px;width:29px;height:24px;background:#c8c8c8;border-top:1px solid #ececec;border-left:1px solid #ececec;border-right:2px solid #5a5a5a"></div>
<div class="a" style="left:987px;top:88px;width:29px;height:24px;background:#c8c8c8;border-top:1px solid #ececec;border-left:1px solid #ececec;border-right:2px solid #5a5a5a"></div>
<div class="a" style="left:870px;top:112px;width:148px;height:1px;background:#f0f0f0"></div>
<div class="a" style="left:842px;top:88px;width:1px;height:25px;background:#f4f4f4"></div>
<svg class="a" style="left:840px;top:84px" width="184" height="300" viewBox="840 84 184 300">
<path d="M855 96L855 110L858 107L861 113L863 112L860 106L865 106Z" transform="translate(0,-3)" fill="#f4f4f4" stroke="#333" stroke-width="1"/>
<path d="M854 92l1 3 3 1-3 1-1 3-1-3-3-1 3-1z" fill="#fff8c0" stroke="#f0e080" stroke-width="0.6"/>
<path d="M879 108A16 16 0 0 1 895 92" fill="none" stroke="#1a1a2a" stroke-width="6"/><path d="M879 108A16 16 0 0 1 895 92" fill="none" stroke="#8a90b0" stroke-width="1.5"/><path d="M877.5 91V108H895" fill="none" stroke="#888" stroke-width="0.6" stroke-dasharray="1 1"/><circle cx="877.5" cy="91" r="1" fill="#111"/><circle cx="895" cy="108" r="1" fill="#111"/>
<rect x="911.5" y="90.5" width="7" height="6" fill="#e8e8f0" stroke="#303040"/><path d="M915 97V104M915 99L907 104M915 99L923 104" stroke="#303040" stroke-width="1.1"/><rect x="905.5" y="104.5" width="4" height="4" fill="#e8e8f0" stroke="#303040"/><rect x="913" y="104.5" width="4" height="4" fill="#e8e8f0" stroke="#303040"/><rect x="920.5" y="104.5" width="4" height="4" fill="#e8e8f0" stroke="#303040"/>
<circle cx="945" cy="100" r="7" fill="#e0e0e0" stroke="#111" stroke-width="2"/><path d="M945 94v12M939 100h12M941 96l8 8M949 96l-8 8" stroke="#a04040" stroke-width="0.6"/><path d="M936 94a9 9 0 0 0 0 12M934 92a12 12 0 0 0 0 16" fill="none" stroke="#333" stroke-width="0.8"/>
<rect x="963.5" y="91.5" width="19" height="14" fill="#fff" stroke="#111" stroke-width="1.6"/><path d="M968 95v8h2v-8z" fill="#3040a0"/><path d="M970 103l4-8 5 8z" fill="#d03040"/><rect x="967" y="107" width="12" height="2" fill="#207030"/>
<path d="M994 94c2-2 4-2 6-2h5c3 0 5 1 6 4-2-1-4-1-6-1h-5c-2 0-4 0-6 1z" fill="#444" stroke="#111" stroke-width="0.8"/><path d="M1000 95h3l0.5 9h-4z" fill="#b04050"/><path d="M999.5 104h4l0.5 5h-5z" fill="#1a1a1a"/>
<rect x="849.5" y="121.5" width="22" height="22" fill="#f0c844"/><path d="M849.5 143.5V121.5H871.5" fill="none" stroke="#5a5a60"/>
<defs><radialGradient id="sph" cx="0.35" cy="0.4" r="0.7"><stop offset="0" stop-color="#e8f0ff"/><stop offset="0.5" stop-color="#8890a0"/><stop offset="1" stop-color="#303838"/></radialGradient></defs><circle cx="861" cy="133" r="6.5" fill="url(#sph)" stroke="#333" stroke-width="0.8"/>
<rect x="878.5" y="127.5" width="7" height="8" fill="#e8e8e8" stroke="#999"/><circle cx="886" cy="135" r="5" fill="#fff" stroke="#111" stroke-width="1.6"/><circle cx="886" cy="135" r="1" fill="#111"/><path d="M884 129l4-4 4 6" fill="none" stroke="#111" stroke-width="1.2"/>
<path d="M902 127l4-3 4 6-3 2z" fill="#d0d8e0" stroke="#333" stroke-width="1"/><path d="M906 130l10 10M905 133l3 5" stroke="#e8e060" stroke-width="2"/><path d="M907 129l10 11" stroke="#222" stroke-width="0.8"/>
<circle cx="929" cy="129" r="3" fill="#fff" stroke="#111" stroke-width="1.4"/><circle cx="936" cy="129" r="3" fill="#fff" stroke="#111" stroke-width="1.4"/><rect x="926" y="132" width="14" height="6" fill="#111"/><rect x="930" y="133.5" width="6" height="3" fill="#ddd"/><path d="M940 133l4-2v7l-4-2z" fill="#111"/><rect x="931" y="138" width="4" height="2" fill="#111"/>
<rect x="952.5" y="128.5" width="9" height="7" rx="2" fill="#e8e8e8" stroke="#555" stroke-width="1"/><circle cx="957" cy="132" r="2" fill="#fff" stroke="#999" stroke-width="0.6"/><path d="M960 137h7" stroke="#c06060" stroke-width="0.8"/>
<path d="M977 128c2-2 4-2 6 0s4 2 6 0M977 132c2-2 4-2 6 0s4 2 6 0M977 136c2-2 4-2 6 0s4 2 6 0" fill="none" stroke="#2a2a40" stroke-width="1"/>
<g stroke="#111" stroke-width="1.6" fill="none"><circle cx="1002" cy="130" r="2.5"/><circle cx="1009" cy="136" r="3"/><path d="M1002 125v2M1002 133v2M997 130h2M1005 130h2M998.5 126.5l1.5 1.5M1004 132l1.5 1.5M1009 130.5v2M1009 139.5v2M1003.5 136h2M1012.5 136h2M1005 132l1.5 1.5M1011.5 138.5l1.5 1.5M1011.5 133.5l1.5-1.5M1005 140l1.5-1.5"/></g>
</svg>
<div class="a" style="left:861px;top:150px;width:141px;height:21px;background:#e4e4e4;border-top:2px solid #4a4a4a;border-left:2px solid #4a4a4a;border-right:1px solid #f4f4f4;border-bottom:1px solid #f4f4f4;font-size:11px;line-height:17px;padding-left:3px;white-space:nowrap;letter-spacing:-0.3px">Standard Primitives</div>
<div class="a" style="left:985px;top:153px;width:16px;height:16px;background:#ece9d8;border:1px solid;border-color:#fff #909090 #909090 #fff"></div>
<svg class="a" style="left:985px;top:153px" width="16" height="16"><path d="M4 7h8l-4 4z" fill="#000"/></svg>
<div class="a" style="left:848px;top:191px;width:164px;height:134px;border:1px solid;border-color:#909090 #f0f0f0 #f0f0f0 #909090"></div>
<div class="a" style="left:849px;top:192px;width:162px;height:132px;border:1px solid;border-color:#f0f0f0 #909090 #909090 #f0f0f0"></div>
<div class="a" style="left:851px;top:183px;width:158px;height:16px;background:#b6b6b6;border:1.5px solid #000;font-size:11px;line-height:13px;text-align:center">Object Type</div>
<div class="a" style="left:856px;top:183px;font-size:11px;line-height:13px">-</div>
<div class="a" style="left:902px;top:202px;font-size:11px;color:#808080">AutoGrid</div>
<div class="a" style="left:956px;top:202px;width:13px;height:13px;border:1px solid;border-color:#808080 #f0f0f0 #f0f0f0 #808080;background:#c8c8c8"></div>
<div class="btn" style="left:857px;top:219px;width:69px;height:18px;border-color:#eeeeee #6a6a6a #6a6a6a #eeeeee">Box</div>
<div class="btn" style="left:935px;top:219px;width:69px;height:18px;border-color:#eeeeee #6a6a6a #6a6a6a #eeeeee">Cone</div>
<div class="btn" style="left:857px;top:240px;width:69px;height:18px;border-color:#eeeeee #6a6a6a #6a6a6a #eeeeee">Sphere</div>
<div class="btn" style="left:935px;top:240px;width:69px;height:18px;border-color:#eeeeee #6a6a6a #6a6a6a #eeeeee">GeoSphere</div>
<div class="btn" style="left:857px;top:261px;width:69px;height:18px;border-color:#eeeeee #6a6a6a #6a6a6a #eeeeee">Cylinder</div>
<div class="btn" style="left:935px;top:261px;width:69px;height:18px;border-color:#eeeeee #6a6a6a #6a6a6a #eeeeee">Tube</div>
<div class="btn" style="left:857px;top:282px;width:69px;height:18px;border-color:#eeeeee #6a6a6a #6a6a6a #eeeeee">Torus</div>
<div class="btn" style="left:935px;top:282px;width:69px;height:18px;border-color:#eeeeee #6a6a6a #6a6a6a #eeeeee">Pyramid</div>
<div class="btn" style="left:857px;top:303px;width:69px;height:18px;border-color:#eeeeee #6a6a6a #6a6a6a #eeeeee">Teapot</div>
<div class="btn" style="left:935px;top:303px;width:69px;height:18px;border-color:#eeeeee #6a6a6a #6a6a6a #eeeeee">Plane</div>
<div class="a" style="left:848px;top:340px;width:164px;height:43px;border:1px solid;border-color:#909090 #f0f0f0 #f0f0f0 #909090"></div>
<div class="a" style="left:849px;top:341px;width:162px;height:41px;border:1px solid;border-color:#f0f0f0 #909090 #909090 #f0f0f0"></div>
<div class="a" style="left:851px;top:332px;width:158px;height:16px;background:#b6b6b6;border:1.5px solid #000;font-size:11px;line-height:13px;text-align:center">Name and Color</div>
<div class="a" style="left:856px;top:332px;font-size:11px;line-height:13px">-</div>
<div class="a" style="left:855px;top:355px;width:131px;height:19px;background:#e4e4e4;border-top:2px solid #202020;border-left:2px solid #202020;border-right:1px solid #f0f0f0;border-bottom:1px solid #f0f0f0;font-size:11px;line-height:16px;padding-left:2px">Box01</div>
<div class="a" style="left:990px;top:355px;width:17px;height:19px;background:#8eb4ea;border:1px solid;border-color:#707070 #f0f0f0 #f0f0f0 #707070"></div><div class="a" style="left:1021px;top:178px;width:1px;height:505px;background:#bababa"></div>
<div class="a" style="left:38px;top:643px;width:806px;height:45px;background:#c8c8c8"></div>
<div class="a" style="left:40px;top:643px;width:800px;height:18px;background:#c8c8c8"></div>
<div class="btn" style="left:41px;top:644px;width:15px;height:16px;line-height:14px;font-size:11px">&lt;</div>
<div class="a" style="left:56px;top:644px;width:126px;height:16px;background:#d0d0d0;border-right:2px solid #000;border-bottom:2px solid #000;border-top:1px solid #f0f0f0;border-left:1px solid #f0f0f0;text-align:center;font-size:11px;line-height:13px">0 / 100</div>
<div class="btn" style="left:182px;top:644px;width:15px;height:16px;line-height:14px;font-size:11px">&gt;</div>
<div class="a" style="left:40px;top:661px;width:800px;height:1px;background:#ececec"></div><div class="a" style="left:98px;top:662px;width:742px;height:1px;background:#9a9a9a"></div>
<div class="a" style="left:40px;top:687px;width:800px;height:1px;background:#ececec"></div>
<div class="a" style="left:89px;top:662px;width:9px;height:26px;background:#98b8d8;border:1px solid #6a8ab0"></div>
<svg class="a" style="left:0;top:0" width="1024" height="768" viewBox="0 0 1024 768">
<rect x="93" y="663" width="1" height="24" fill="#4a6a90"/>
<rect x="100" y="662" width="1" height="12" fill="#6e6e6e"/>
<rect x="107" y="662" width="1" height="12" fill="#6e6e6e"/>
<rect x="114" y="662" width="1" height="12" fill="#6e6e6e"/>
<rect x="121" y="662" width="1" height="12" fill="#6e6e6e"/>
<rect x="128" y="662" width="1" height="12" fill="#6e6e6e"/>
<rect x="135" y="662" width="1" height="12" fill="#6e6e6e"/>
<rect x="142" y="662" width="1" height="12" fill="#6e6e6e"/>
<rect x="149" y="662" width="1" height="12" fill="#6e6e6e"/>
<rect x="155" y="662" width="1" height="12" fill="#6e6e6e"/>
<rect x="162" y="662" width="1" height="12" fill="#6e6e6e"/>
<rect x="169" y="662" width="1" height="12" fill="#6e6e6e"/>
<rect x="176" y="662" width="1" height="12" fill="#6e6e6e"/>
<rect x="183" y="662" width="1" height="12" fill="#6e6e6e"/>
<rect x="190" y="662" width="1" height="12" fill="#6e6e6e"/>
<rect x="197" y="662" width="1" height="12" fill="#6e6e6e"/>
<rect x="204" y="662" width="1" height="12" fill="#6e6e6e"/>
<rect x="211" y="662" width="1" height="12" fill="#6e6e6e"/>
<rect x="218" y="662" width="1" height="12" fill="#6e6e6e"/>
<rect x="225" y="662" width="1" height="12" fill="#6e6e6e"/>
<rect x="232" y="662" width="1" height="12" fill="#6e6e6e"/>
<rect x="239" y="662" width="1" height="12" fill="#6e6e6e"/>
<rect x="246" y="662" width="1" height="12" fill="#6e6e6e"/>
<rect x="253" y="662" width="1" height="12" fill="#6e6e6e"/>
<rect x="260" y="662" width="1" height="12" fill="#6e6e6e"/>
<rect x="267" y="662" width="1" height="12" fill="#6e6e6e"/>
<rect x="274" y="662" width="1" height="12" fill="#6e6e6e"/>
<rect x="280" y="662" width="1" height="12" fill="#6e6e6e"/>
<rect x="287" y="662" width="1" height="12" fill="#6e6e6e"/>
<rect x="294" y="662" width="1" height="12" fill="#6e6e6e"/>
<rect x="301" y="662" width="1" height="12" fill="#6e6e6e"/>
<rect x="308" y="662" width="1" height="12" fill="#6e6e6e"/>
<rect x="315" y="662" width="1" height="12" fill="#6e6e6e"/>
<rect x="322" y="662" width="1" height="12" fill="#6e6e6e"/>
<rect x="329" y="662" width="1" height="12" fill="#6e6e6e"/>
<rect x="336" y="662" width="1" height="12" fill="#6e6e6e"/>
<rect x="343" y="662" width="1" height="12" fill="#6e6e6e"/>
<rect x="350" y="662" width="1" height="12" fill="#6e6e6e"/>
<rect x="357" y="662" width="1" height="12" fill="#6e6e6e"/>
<rect x="364" y="662" width="1" height="12" fill="#6e6e6e"/>
<rect x="371" y="662" width="1" height="12" fill="#6e6e6e"/>
<rect x="378" y="662" width="1" height="12" fill="#6e6e6e"/>
<rect x="385" y="662" width="1" height="12" fill="#6e6e6e"/>
<rect x="392" y="662" width="1" height="12" fill="#6e6e6e"/>
<rect x="398" y="662" width="1" height="12" fill="#6e6e6e"/>
<rect x="405" y="662" width="1" height="12" fill="#6e6e6e"/>
<rect x="412" y="662" width="1" height="12" fill="#6e6e6e"/>
<rect x="419" y="662" width="1" height="12" fill="#6e6e6e"/>
<rect x="426" y="662" width="1" height="12" fill="#6e6e6e"/>
<rect x="433" y="662" width="1" height="12" fill="#6e6e6e"/>
<rect x="440" y="662" width="1" height="12" fill="#6e6e6e"/>
<rect x="447" y="662" width="1" height="12" fill="#6e6e6e"/>
<rect x="454" y="662" width="1" height="12" fill="#6e6e6e"/>
<rect x="461" y="662" width="1" height="12" fill="#6e6e6e"/>
<rect x="468" y="662" width="1" height="12" fill="#6e6e6e"/>
<rect x="475" y="662" width="1" height="12" fill="#6e6e6e"/>
<rect x="482" y="662" width="1" height="12" fill="#6e6e6e"/>
<rect x="489" y="662" width="1" height="12" fill="#6e6e6e"/>
<rect x="496" y="662" width="1" height="12" fill="#6e6e6e"/>
<rect x="503" y="662" width="1" height="12" fill="#6e6e6e"/>
<rect x="510" y="662" width="1" height="12" fill="#6e6e6e"/>
<rect x="517" y="662" width="1" height="12" fill="#6e6e6e"/>
<rect x="523" y="662" width="1" height="12" fill="#6e6e6e"/>
<rect x="530" y="662" width="1" height="12" fill="#6e6e6e"/>
<rect x="537" y="662" width="1" height="12" fill="#6e6e6e"/>
<rect x="544" y="662" width="1" height="12" fill="#6e6e6e"/>
<rect x="551" y="662" width="1" height="12" fill="#6e6e6e"/>
<rect x="558" y="662" width="1" height="12" fill="#6e6e6e"/>
<rect x="565" y="662" width="1" height="12" fill="#6e6e6e"/>
<rect x="572" y="662" width="1" height="12" fill="#6e6e6e"/>
<rect x="579" y="662" width="1" height="12" fill="#6e6e6e"/>
<rect x="586" y="662" width="1" height="12" fill="#6e6e6e"/>
<rect x="593" y="662" width="1" height="12" fill="#6e6e6e"/>
<rect x="600" y="662" width="1" height="12" fill="#6e6e6e"/>
<rect x="607" y="662" width="1" height="12" fill="#6e6e6e"/>
<rect x="614" y="662" width="1" height="12" fill="#6e6e6e"/>
<rect x="621" y="662" width="1" height="12" fill="#6e6e6e"/>
<rect x="628" y="662" width="1" height="12" fill="#6e6e6e"/>
<rect x="635" y="662" width="1" height="12" fill="#6e6e6e"/>
<rect x="641" y="662" width="1" height="12" fill="#6e6e6e"/>
<rect x="648" y="662" width="1" height="12" fill="#6e6e6e"/>
<rect x="655" y="662" width="1" height="12" fill="#6e6e6e"/>
<rect x="662" y="662" width="1" height="12" fill="#6e6e6e"/>
<rect x="669" y="662" width="1" height="12" fill="#6e6e6e"/>
<rect x="676" y="662" width="1" height="12" fill="#6e6e6e"/>
<rect x="683" y="662" width="1" height="12" fill="#6e6e6e"/>
<rect x="690" y="662" width="1" height="12" fill="#6e6e6e"/>
<rect x="697" y="662" width="1" height="12" fill="#6e6e6e"/>
<rect x="704" y="662" width="1" height="12" fill="#6e6e6e"/>
<rect x="711" y="662" width="1" height="12" fill="#6e6e6e"/>
<rect x="718" y="662" width="1" height="12" fill="#6e6e6e"/>
<rect x="725" y="662" width="1" height="12" fill="#6e6e6e"/>
<rect x="732" y="662" width="1" height="12" fill="#6e6e6e"/>
<rect x="739" y="662" width="1" height="12" fill="#6e6e6e"/>
<rect x="746" y="662" width="1" height="12" fill="#6e6e6e"/>
<rect x="753" y="662" width="1" height="12" fill="#6e6e6e"/>
<rect x="760" y="662" width="1" height="12" fill="#6e6e6e"/>
<rect x="766" y="662" width="1" height="12" fill="#6e6e6e"/>
<rect x="773" y="662" width="1" height="12" fill="#6e6e6e"/>
<rect x="780" y="662" width="1" height="12" fill="#6e6e6e"/>
<rect x="787" y="662" width="1" height="12" fill="#6e6e6e"/>
<rect x="162" y="674" width="1" height="13" fill="#8a8a8a"/><rect x="232" y="674" width="1" height="13" fill="#8a8a8a"/><rect x="301" y="674" width="1" height="13" fill="#8a8a8a"/><rect x="371" y="674" width="1" height="13" fill="#8a8a8a"/><rect x="440" y="674" width="1" height="13" fill="#8a8a8a"/><rect x="510" y="674" width="1" height="13" fill="#8a8a8a"/><rect x="579" y="674" width="1" height="13" fill="#8a8a8a"/><rect x="648" y="674" width="1" height="13" fill="#8a8a8a"/><rect x="718" y="674" width="1" height="13" fill="#8a8a8a"/><rect x="787" y="674" width="1" height="13" fill="#8a8a8a"/><g font-family="Liberation Sans" font-size="11" text-anchor="middle">
<text x="93.0" y="684.5">0</text>
<text x="162.4" y="684.5">10</text>
<text x="231.9" y="684.5">20</text>
<text x="301.3" y="684.5">30</text>
<text x="370.7" y="684.5">40</text>
<text x="440.1" y="684.5">50</text>
<text x="509.6" y="684.5">60</text>
<text x="579.0" y="684.5">70</text>
<text x="648.4" y="684.5">80</text>
<text x="717.9" y="684.5">90</text>
<text x="787.3" y="684.5">100</text>
</g>
<g fill="none" stroke="#000"><rect x="53.5" y="667.5" width="16" height="5" stroke-width="1.3"/><path d="M55.5 670.5c1.5-1.5 3-1.5 4.5 0s2.5 0.5 3.5 0.5h4" stroke-width="0.9"/><rect x="53.5" y="681.5" width="16" height="2.5" stroke-width="1.3"/><path d="M56 682.8h2.5M60 682.8h3M64.5 682.8h3" stroke-width="0.8"/><path d="M56.5 680v-5M54.5 677l2-2 2 2M67 675v5M65 678l2 2 2-2" stroke-width="1.1"/></g></svg><div class="a" style="left:2px;top:691px;width:97px;height:21px;background:#dcc5c5;border-top:1px solid #5a5050;border-left:1px solid #5a5050;border-bottom:1px solid #f8f4f0;border-right:1px solid #f8f4f0"></div>
<div class="a" style="left:2px;top:713px;width:97px;height:24px;background:#fff;border-top:1px solid #5a5050;border-left:1px solid #5a5050"></div>
<div class="a" style="left:103px;top:689px;width:1px;height:49px;background:#808080"></div>
<div class="a" style="left:104px;top:689px;width:1px;height:49px;background:#f0f0f0"></div>
<div class="a" style="left:107px;top:692px;width:72px;height:20px;background:#cacaca;border:1px solid;border-color:#a0a0a0 #f0f0f0 #f0f0f0 #a0a0a0;font-size:11px;line-height:18px;padding-left:5px;white-space:nowrap;overflow:hidden">1 Object Sele</div>
<div class="a" style="left:107px;top:716px;width:371px;height:21px;background:#cacaca;border:1px solid;border-color:#a0a0a0 #f0f0f0 #f0f0f0 #a0a0a0;font-size:11px;line-height:20px;padding-left:5px;white-space:nowrap;letter-spacing:-0.15px">Click and drag to select and move objects</div>
<div class="a" style="left:234px;top:694px;font-size:12px;color:#222">X:</div>
<div class="inp" style="left:246px;top:693px;width:56px;height:19px;border-width:2px 1px 1px 2px;font-size:11px;line-height:16px;padding-left:3px">-4.426</div>
<div class="a" style="left:303px;top:694px;width:10px;height:18px;border:1px solid;border-color:#f0f0f0 #707070 #707070 #f0f0f0"></div><svg class="a" style="left:303px;top:694px" width="10" height="18"><path d="M2 7L5 3L8 7Z M2 11L8 11L5 15Z" fill="#000"/></svg>
<div class="a" style="left:316px;top:694px;font-size:12px;color:#222">Y:</div>
<div class="inp" style="left:327px;top:693px;width:56px;height:19px;border-width:2px 1px 1px 2px;font-size:11px;line-height:16px;padding-left:3px">2.123</div>
<div class="a" style="left:385px;top:694px;width:10px;height:18px;border:1px solid;border-color:#f0f0f0 #707070 #707070 #f0f0f0"></div><svg class="a" style="left:385px;top:694px" width="10" height="18"><path d="M2 7L5 3L8 7Z M2 11L8 11L5 15Z" fill="#000"/></svg>
<div class="a" style="left:398px;top:694px;font-size:12px;color:#222">Z:</div>
<div class="inp" style="left:410px;top:693px;width:56px;height:19px;border-width:2px 1px 1px 2px;font-size:11px;line-height:16px;padding-left:3px">0.0</div>
<div class="a" style="left:468px;top:694px;width:10px;height:18px;border:1px solid;border-color:#f0f0f0 #707070 #707070 #f0f0f0"></div><svg class="a" style="left:468px;top:694px" width="10" height="18"><path d="M2 7L5 3L8 7Z M2 11L8 11L5 15Z" fill="#000"/></svg>
<svg class="a" style="left:186px;top:694px" width="12" height="14"><path d="M3 6V4a3 3 0 0 1 6 0v2" fill="none" stroke="#111" stroke-width="1.6"/><rect x="1.5" y="6" width="9" height="7" fill="#111"/><path d="M2 8.5h8M2 11h8" stroke="#c8c8c8" stroke-width="0.8"/></svg>
<svg class="a" style="left:211px;top:694px" width="16" height="15"><rect x="0.5" y="0.5" width="15" height="14" fill="none" stroke="#111"/><path d="M8 2v11M2 7.5h12" stroke="#111" stroke-width="0.8"/><circle cx="8" cy="7.5" r="2.2" fill="#333"/></svg>
<div class="a" style="left:481px;top:692px;width:99px;height:20px;background:#cacaca;border:1px solid;border-color:#a0a0a0 #f0f0f0 #f0f0f0 #a0a0a0;font-size:11px;line-height:18px;padding-left:5px">Grid = 10.0</div>
<div class="a" style="left:481px;top:716px;width:99px;height:21px;background:#cacaca;border:1px solid;border-color:#f0f0f0 #808080 #808080 #f0f0f0;font-size:11px;line-height:19px;padding-left:5px">Add Time Tag</div>
<div class="a" style="left:583px;top:692px;width:43px;height:45px;background:#c8c8c8;border:1px solid;border-color:#f0f0f0 #707070 #707070 #f0f0f0"></div>
<svg class="a" style="left:590px;top:705px" width="28" height="16"><circle cx="6" cy="8" r="4.5" fill="none" stroke="#000" stroke-width="2.2"/><path d="M10.5 8H26M18 8v5M22 8v4M25 8v4" stroke="#000" stroke-width="2.5"/></svg>
<div class="btn" style="left:630px;top:691px;width:46px;height:22px;line-height:20px;font-size:11px;letter-spacing:-0.3px">Auto Key</div>
<div class="btn" style="left:630px;top:713px;width:46px;height:22px;line-height:20px;font-size:11px">Set Key</div>
<div class="inp" style="left:680px;top:692px;width:115px;height:19px;border-width:2px 1px 1px 2px;font-size:11px;line-height:15px;padding-left:3px">Selected</div>
<div class="a" style="left:777px;top:694px;width:16px;height:15px;background:#ece9d8;border:1px solid;border-color:#fff #808080 #808080 #fff"></div>
<svg class="a" style="left:777px;top:694px" width="16" height="15"><path d="M4 6h8l-4 4z" fill="#000"/></svg>
<svg class="a" style="left:682px;top:714px" width="22" height="21"><path d="M3 17L8 6L14 16L19 4" fill="none" stroke="#c03030" stroke-width="1.2"/><path d="M3 14L19 14M3 9L19 9" stroke="#8080c0" stroke-width="0.6"/><path d="M19 19l2-2v2z" fill="#000"/></svg>
<div class="btn" style="left:707px;top:714px;width:88px;height:21px;line-height:19px;font-size:11px">Key Filters...</div>
<svg class="a" style="left:800px;top:688px" width="224" height="50" viewBox="800 688 224 50">
<rect x="825" y="692" width="1" height="18" fill="#808080"/><rect x="826" y="692" width="1" height="18" fill="#f0f0f0"/>
<rect x="897" y="692" width="1" height="18" fill="#808080"/><rect x="898" y="692" width="1" height="18" fill="#f0f0f0"/>
<rect x="926" y="692" width="1" height="18" fill="#808080"/><rect x="927" y="692" width="1" height="18" fill="#f0f0f0"/>
<rect x="926" y="714" width="1" height="20" fill="#808080"/><rect x="927" y="714" width="1" height="20" fill="#f0f0f0"/>
<rect x="822" y="714" width="1" height="20" fill="#808080"/>
<rect x="804" y="697" width="2" height="11" fill="#111"/><path d="M806 702.5l6-5v10z M812 702.5l6-5v10z" fill="#111"/><rect x="818" y="697" width="2" height="11" fill="#111"/>
<path d="M832 702.5l5-4.5v9z" fill="#111"/><rect x="838" y="698" width="2" height="9" fill="#111"/><rect x="841" y="698" width="2" height="9" fill="#111"/><rect x="844" y="698" width="2" height="9" fill="#111"/>
<rect x="853" y="694" width="16" height="16" fill="none" stroke="#111" stroke-width="2"/><path d="M858 697.5l6 4.5-6 4.5z" fill="#111"/><path d="M868 711l2-2v2z" fill="#000"/>
<rect x="877" y="698" width="2" height="9" fill="#111"/><rect x="880" y="698" width="2" height="9" fill="#111"/><rect x="883" y="698" width="2" height="9" fill="#111"/><path d="M885 698l5 4.5-5 4.5z" fill="#111"/>
<path d="M902 697.5l6 5-6 5z M908 697.5l6 5-6 5z" fill="#111"/><rect x="914" y="697" width="2" height="11" fill="#111"/>
<rect x="807" y="719" width="1.5" height="9" fill="#111"/><path d="M809 723.5l4-3.5v7z M817 723.5l-4-3.5v7z" fill="#111"/><rect x="817" y="719" width="1.5" height="9" fill="#111"/>
<rect x="908.5" y="716.5" width="10" height="12" fill="#e8e8e8" stroke="#333"/><rect x="909" y="717" width="9" height="2" fill="#333"/><circle cx="916" cy="727" r="4.5" fill="#f0e8e8" stroke="#b03030" stroke-width="1.2"/><path d="M916 724v3h2" stroke="#b03030" stroke-width="1" fill="none"/>
<circle cx="936" cy="699" r="4.5" fill="#e8f0ff" stroke="#333" stroke-width="1.2"/><path d="M939 702l6 6" stroke="#303070" stroke-width="2.4"/>
<g stroke="#b03030" stroke-width="1" fill="#e8e8f0"><rect x="961.5" y="694.5" width="8" height="5"/><rect x="961.5" y="699.5" width="8" height="5"/><rect x="961.5" y="704.5" width="8" height="4"/></g><path d="M961.5 694.5h-6v4" stroke="#b03030" fill="none"/><circle cx="959" cy="703" r="3.5" fill="#e8f0ff" stroke="#333" stroke-width="1.1"/><path d="M961 705.5l4 4" stroke="#303070" stroke-width="2"/>
<path d="M977 697v-3h3M990 694h3v3M993 706v3h-3M980 709h-3v-3" fill="none" stroke="#111" stroke-width="1.3"/><path d="M980.5 699.5l3-3h7v8l-3 3h-7z" fill="#d8d8f0" stroke="#303060" stroke-width="1"/><path d="M980.5 699.5h7v8M987.5 699.5l3-3" fill="none" stroke="#303060"/><path d="M992 711l2-2v2z" fill="#000"/>
<g stroke="#b03030" stroke-width="1" fill="#e0d0d0"><rect x="1004.5" y="694.5" width="11" height="10"/><path d="M1010 694.5v10M1004.5 699.5h11"/></g><path d="M1001.5 702.5l3-3h6v7l-3 3h-6z" fill="#d8d8f0" stroke="#303060"/><path d="M1015 711l2-2v2z" fill="#000"/>
<rect x="929" y="714" width="21" height="20" fill="#d4d4d4"/><path d="M946 724L931 717M946 724L931 732" stroke="#111" stroke-width="1.8"/><path d="M937 720c2 2 2 6 0 8" stroke="#111" fill="none"/><path d="M946 733l2-2v2z" fill="#000"/>
<path d="M956 724l3 4 3 4h7l2-5v-7h-2v4-6h-2v6-7h-2v7-7h-2v7-5h-2v7l-2-2z" fill="#fff" stroke="#111" stroke-width="1"/><path d="M969 733l2-2v2z" fill="#000"/>
<circle cx="985" cy="724" r="5.5" fill="#e8e8f0" stroke="#303060" stroke-width="1"/><path d="M985 716v16M977 724h16" stroke="#303060" stroke-width="0.8"/><path d="M985 715l-2 3h4zM993 724l-3-2v4zM977 724l3-2v4z" fill="#111"/><path d="M992 733l2-2v2z" fill="#000"/>
<rect x="1001.5" y="715.5" width="10" height="10" fill="#d8d8f0" stroke="#303060"/><rect x="1006.5" y="720.5" width="10" height="10" fill="#d8d8f0" stroke="#303060"/><path d="M1003 717l6 6" stroke="#111"/><path d="M1003 717h3M1003 717v3" stroke="#111"/>
</svg>
<div class="inp" style="left:827px;top:714px;width:63px;height:20px;border-width:2px 1px 1px 2px;border-color:#202020 #f0f0f0 #f0f0f0 #202020;font-size:11px;line-height:17px;padding-left:3px">0</div>
<div class="a" style="left:891px;top:715px;width:11px;height:19px;border:1px solid;border-color:#f0f0f0 #707070 #707070 #f0f0f0"></div>
<svg class="a" style="left:891px;top:715px" width="11" height="19"><path d="M2 8L5.5 4L9 8Z M2 11L9 11L5.5 15Z" fill="#000"/></svg><div class="a" style="left:0;top:738px;width:1024px;height:30px;background:linear-gradient(#2a5ec8 0,#3d86f0 1px,#3a80f0 3px,#2c6ae4 6px,#245fdc 15px,#2259d4 25px,#1d4eb8 30px)"></div>
<div class="a" style="left:877px;top:738px;width:147px;height:30px;background:linear-gradient(#2a8ad8 0,#1aa0f4 2px,#1294ec 6px,#0f8be4 20px,#0c7ed6 30px);border-left:1px solid #0a4aa0"></div>
<div class="a" style="left:0;top:738px;width:97px;height:30px;border-radius:0 11px 11px 0;background:linear-gradient(#3d9a3d 0,#5cc05c 2px,#44a844 6px,#3a9a3a 16px,#32902f 24px,#2a7a2a 30px);box-shadow:inset -2px 0 3px #1e5e1e"></div>
<svg class="a" style="left:10px;top:743px" width="20" height="20"><path d="M2 3c3-2 5-1 7 0l-1 6c-2-1-4-2-7 0z" fill="#f0602a"/><path d="M10 3c2 1 5 2 8 0l-1 6c-3 2-5 1-8 0z" fill="#6ac43a"/><path d="M1 10c3-2 5-1 7 0l-1 6c-2-1-4-2-7 0z" fill="#3a8af0"/><path d="M9 10c2 1 5 2 8 0l-1 6c-3 2-5 1-8 0z" fill="#f8c828"/></svg>
<div class="a" style="left:35px;top:742px;color:#fff;font-style:italic;font-weight:bold;font-size:17px;text-shadow:1px 1px 1px #1a4a1a;letter-spacing:0px;top:743px">start</div>
<div class="a" style="left:107px;top:741px;width:120px;height:24px;border-radius:3px;background:linear-gradient(#4a92f8,#3c82f2 40%,#3878ea);box-shadow:inset -1px -1px 1px #2456c0,inset 1px 1px 1px #6aaaff"></div>
<div class="a" style="left:135px;top:747px;color:#fff;font-size:11px;white-space:nowrap">2 Windows ...</div>
<svg class="a" style="left:217px;top:751px" width="8" height="5"><path d="M0 0h7l-3.5 4z" fill="#fff"/></svg>
<svg class="a" style="left:116px;top:745px" width="17" height="16"><path d="M1 3h6l1 2h8v10H1z" fill="#e8c050" stroke="#8a6a20" stroke-width="0.8"/><path d="M1 7h15v8H1z" fill="#f8e090"/></svg>
<div class="a" style="left:229px;top:741px;width:120px;height:24px;border-radius:3px;background:linear-gradient(#4a92f8,#3c82f2 40%,#3878ea);box-shadow:inset -1px -1px 1px #2456c0,inset 1px 1px 1px #6aaaff"></div>
<div class="a" style="left:257px;top:747px;color:#fff;font-size:11px;white-space:nowrap">install.txt - N...</div>
<svg class="a" style="left:238px;top:744px" width="17" height="18"><path d="M3 2h9l3 14H6z" fill="#a8d8f0" stroke="#3a6a9a" stroke-width="1"/></svg>
<div class="a" style="left:352px;top:741px;width:120px;height:24px;border-radius:3px;background:linear-gradient(#4a92f8,#3c82f2 40%,#3878ea);box-shadow:inset -1px -1px 1px #2456c0,inset 1px 1px 1px #6aaaff"></div>
<div class="a" style="left:380px;top:747px;color:#fff;font-size:11px;white-space:nowrap">2 WinRAR a...</div>
<svg class="a" style="left:462px;top:751px" width="8" height="5"><path d="M0 0h7l-3.5 4z" fill="#fff"/></svg>
<svg class="a" style="left:361px;top:744px" width="17" height="18"><rect x="2" y="2" width="12" height="14" fill="#802060"/><rect x="2" y="5" width="12" height="2" fill="#e04040"/><rect x="2" y="9" width="12" height="2" fill="#40a040"/><rect x="2" y="13" width="12" height="2" fill="#4060c0"/></svg>
<div class="a" style="left:475px;top:741px;width:120px;height:24px;border-radius:3px;background:linear-gradient(#4a92f8,#3c82f2 40%,#3878ea);box-shadow:inset -1px -1px 1px #2456c0,inset 1px 1px 1px #6aaaff"></div>
<div class="a" style="left:503px;top:747px;color:#fff;font-size:11px;white-space:nowrap">Autodesk 3ds...</div>
<svg class="a" style="left:484px;top:744px" width="18" height="18"><rect x="1" y="1" width="16" height="16" fill="#2a4a8a"/><circle cx="9" cy="9" r="6" fill="none" stroke="#e0f0ff" stroke-width="2"/><path d="M12 6c-3-2-6 0-5 3s5 1 4 4" fill="none" stroke="#e0f0ff" stroke-width="1.6"/></svg>
<div class="a" style="left:597px;top:741px;width:120px;height:24px;border-radius:3px;background:#1e50bf;box-shadow:inset 1px 1px 2px #0c2a78"></div>
<div class="a" style="left:625px;top:747px;color:#fff;font-size:11px;white-space:nowrap">Untitled - Aut...</div>
<svg class="a" style="left:606px;top:744px" width="18" height="18"><rect x="1" y="1" width="16" height="16" fill="#2a4a8a"/><circle cx="9" cy="9" r="6" fill="none" stroke="#e0f0ff" stroke-width="2"/><path d="M12 6c-3-2-6 0-5 3s5 1 4 4" fill="none" stroke="#e0f0ff" stroke-width="1.6"/></svg>
<div class="a" style="left:720px;top:741px;width:120px;height:24px;border-radius:3px;background:linear-gradient(#4a92f8,#3c82f2 40%,#3878ea);box-shadow:inset -1px -1px 1px #2456c0,inset 1px 1px 1px #6aaaff"></div>
<div class="a" style="left:748px;top:747px;color:#fff;font-size:11px;white-space:nowrap">ZoneAlarm Se...</div>
<svg class="a" style="left:729px;top:744px" width="18" height="18"><rect x="1" y="1" width="8" height="16" fill="#a01818"/><rect x="9" y="1" width="8" height="16" fill="#f0b020"/><text x="2" y="14" font-size="11" font-weight="bold" fill="#fff" font-family="Liberation Sans">Z</text><text x="9.5" y="14" font-size="11" font-weight="bold" fill="#a01818" font-family="Liberation Sans">A</text></svg>
<div class="a" style="left:851px;top:747px;color:#fff;font-size:11px">EN</div>
<svg class="a" style="left:866px;top:741px" width="158" height="26" viewBox="866 741 158 26"><circle cx="877" cy="753.5" r="8.5" fill="#3a8af0" stroke="#b8d8ff" stroke-width="1.2"/><path d="M879 749l-4 4.5 4 4.5" fill="none" stroke="#fff" stroke-width="2"/><circle cx="894" cy="754" r="7" fill="#f8c830" stroke="#c07010" stroke-width="0.8"/><path d="M890 755c2 3 6 3 8 0z" fill="#a02010"/><circle cx="900" cy="747" r="2.5" fill="#8040c0" stroke="#fff" stroke-width="0.8"/><rect x="907" y="746" width="15" height="15" fill="#101010"/><rect x="908" y="747" width="5" height="1" fill="#c02020"/><rect x="915" y="747" width="6" height="1" fill="#20c020"/><rect x="908" y="749" width="5" height="1" fill="#c02020"/><rect x="915" y="749" width="6" height="1" fill="#20c020"/><rect x="908" y="751" width="5" height="1" fill="#c02020"/><rect x="915" y="751" width="6" height="1" fill="#20c020"/><rect x="908" y="753" width="5" height="1" fill="#c02020"/><rect x="915" y="753" width="6" height="1" fill="#20c020"/><rect x="908" y="755" width="5" height="1" fill="#c02020"/><rect x="915" y="755" width="6" height="1" fill="#20c020"/><rect x="908" y="757" width="5" height="1" fill="#c02020"/><rect x="915" y="757" width="6" height="1" fill="#20c020"/><rect x="908" y="759" width="5" height="1" fill="#c02020"/><rect x="915" y="759" width="6" height="1" fill="#20c020"/><circle cx="932" cy="749" r="3" fill="#6ab0d8"/><path d="M926 761c1-6 3-8 6-8s5 2 6 8z" fill="#5aa0c8"/><rect x="945" y="748" width="13" height="10" fill="#80c020" stroke="#406010" stroke-width="0.6"/><path d="M943 753c2-3 7-3 9 0-2 3-7 3-9 0z" fill="#fff" stroke="#333" stroke-width="0.6"/><path d="M962 747l6-2 6 2v6c0 4-3 6-6 8-3-2-6-4-6-8z" fill="#d02828" stroke="#801010" stroke-width="0.6"/><path d="M965 750l6 6M971 750l-6 6" stroke="#fff" stroke-width="1.5"/></svg>
<div class="a" style="left:983px;top:747px;color:#fff;font-size:11px">21:58</div></body></html>
